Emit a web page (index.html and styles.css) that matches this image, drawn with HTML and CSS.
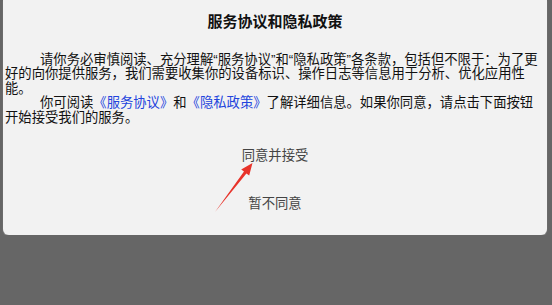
FILE: index.html
```html
<!DOCTYPE html>
<html lang="zh-CN">
<head>
    <meta charset="UTF-8">
    <meta name="viewport" content="width=device-width, initial-scale=1.0">
    <title>服务协议和隐私政策</title>
    <link rel="stylesheet" href="styles.css">
</head>
<body>
    <div class="dialog">
        <h2 class="title">服务协议和隐私政策</h2>
        <div class="content">
            <p class="para">请你务必审慎阅读、充分理解“服务协议”和“隐私政策”各条款，包括但不限于：为了更<br>好的向你提供服务，我们需要收集你的设备标识、操作日志等信息用于分析、优化应用性<br>能。</p>
            <p class="para">你可阅读<a class="link" href="#">《服务协议》</a>和<a class="link" href="#">《隐私政策》</a>了解详细信息。如果你同意，请点击下面按钮<br>开始接受我们的服务。</p>
        </div>
        <div class="actions">
            <button class="btn">同意并接受</button>
            <button class="btn">暂不同意</button>
        </div>
        <!-- red annotation arrow drawn over the dialog -->
        <svg class="arrow" width="55" height="60" viewBox="0 0 55 60">
            <polygon points="10,54 39,13.6 36.2,11.5 47.5,5 44.2,17.5 41.4,15.4" fill="#e8332a"/>
        </svg>
    </div>
</body>
</html>
```

FILE: styles.css
```css
*{
    margin:0;
    padding:0;
    box-sizing:border-box;
}
body{
    background-color:#666666;
    font-family:"Liberation Sans","Noto Sans CJK SC",sans-serif;
}
.dialog{
    position:relative;
    width:544px;
    height:235px;
    margin-left:3px;
    background-color:#f2f2f2;
    border-radius:0 0 6px 6px;
    box-shadow:0 1px 1px #9a9a9a;
}
.title{
    padding-top:11px;
    text-align:center;
    font-family:"Noto Sans CJK SC",sans-serif;
    font-size:15px;
    line-height:20px;
    font-weight:700;
    color:#111;
}
.content{
    margin-top:21.75px;
    padding:0 4px 0 2px;
    font-size:13.33px;
    line-height:14.5px;
    color:#111;
    text-spacing-trim:space-all;
}
.para{
    text-indent:35px;
    white-space:nowrap;
}
.link{
    color:#2244dd;
    text-decoration:none;
}
.actions{
    display:flex;
    flex-direction:column;
    align-items:center;
    gap:28px;
    padding-top:20.75px;
}
.btn{
    border:none;
    background:none;
    font-family:"Liberation Sans","Noto Sans CJK SC",sans-serif;
    font-size:13.33px;
    line-height:20px;
    color:#444;
}
.arrow{
    position:absolute;
    left:202px;
    top:158px;
}
```
